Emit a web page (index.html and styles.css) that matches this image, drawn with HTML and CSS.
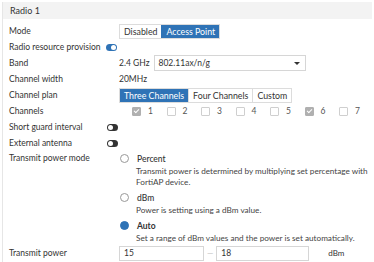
FILE: index.html
```html
<!DOCTYPE html>
<html lang="en">
  <head>
    <meta charset="UTF-8" />
    <title>Radio 1</title>
    <link rel="stylesheet" href="styles.css">
  </head>
  <body>
    <div class="panel">
      <div class="panel-title">Radio 1</div>

      <div class="row">
        <div class="label">Mode</div>
        <div class="btn-group">
          <span class="btn">Disabled</span>
          <span class="btn active">Access Point</span>
        </div>
      </div>

      <div class="row">
        <div class="label label-auto">Radio resource provision</div>
        <span class="toggle on"></span>
      </div>

      <div class="row">
        <div class="label">Band</div>
        <span class="band-text">2.4 GHz</span>
        <div class="select">
          <span>802.11ax/n/g</span>
          <span class="caret"></span>
        </div>
      </div>

      <div class="row">
        <div class="label">Channel width</div>
        <span>20MHz</span>
      </div>

      <div class="row">
        <div class="label">Channel plan</div>
        <div class="btn-group">
          <span class="btn active">Three Channels</span>
          <span class="btn">Four Channels</span>
          <span class="btn">Custom</span>
        </div>
      </div>

      <div class="row">
        <div class="label">Channels</div>
        <div class="channels">
          <label class="chan"><span class="check checked"></span>1</label>
          <label class="chan"><span class="check"></span>2</label>
          <label class="chan"><span class="check"></span>3</label>
          <label class="chan"><span class="check"></span>4</label>
          <label class="chan"><span class="check"></span>5</label>
          <label class="chan"><span class="check checked"></span>6</label>
          <label class="chan"><span class="check"></span>7</label>
        </div>
      </div>

      <div class="row">
        <div class="label label-toggle">Short guard interval</div>
        <span class="toggle"></span>
      </div>

      <div class="row">
        <div class="label label-toggle">External antenna</div>
        <span class="toggle"></span>
      </div>

      <div class="row row-top">
        <div class="label">Transmit power mode</div>
        <div class="options">
          <div class="option">
            <div class="option-title"><span class="radio"></span>Percent</div>
            <div class="option-desc">Transmit power is determined by multiplying set percentage with FortiAP device.</div>
          </div>
          <div class="option">
            <div class="option-title"><span class="radio"></span>dBm</div>
            <div class="option-desc">Power is setting using a dBm value.</div>
          </div>
          <div class="option">
            <div class="option-title selected"><span class="radio checked"></span>Auto</div>
            <div class="option-desc">Set a range of dBm values and the power is set automatically.</div>
          </div>
        </div>
      </div>

      <div class="row">
        <div class="label">Transmit power</div>
        <div class="range">
          <div class="input input-from">15</div>
          <span class="dash">&mdash;</span>
          <div class="input input-to">18</div>
          <span class="unit">dBm</span>
        </div>
      </div>
    </div>
  </body>
</html>
```

FILE: styles.css
```css
body {
  margin: 0;
  font-family: Lato, "Open Sans", sans-serif;
  font-size: 8.5px;
  color: #333;
  background-color: #fff;
}

.panel {
  margin: 2px 2px 0 2px;
  border-left: 1px solid #e6e6e6;
  height: 260px;
  overflow: hidden;
}

.panel-title {
  background-color: #f3f3f3;
  height: 17px;
  line-height: 17px;
  padding-left: 7px;
  font-size: 9px;
}

.row {
  display: flex;
  align-items: center;
  height: 16px;
}

.row:nth-child(2) {
  margin-top: 4px;
}

.row-top {
  align-items: flex-start;
  height: auto;
  margin-bottom: 1px;
}

.row-top .label {
  line-height: 15px;
}

.label {
  width: 110px;
  padding-left: 6px;
  flex-shrink: 0;
}

.label-auto {
  width: auto;
  padding-right: 5px;
}

.label-toggle {
  width: 98px;
}

/* button groups */
.btn-group {
  display: flex;
  border: 1px solid #dcdcdc;
}

.btn {
  padding: 0 4px;
  height: 13px;
  line-height: 13px;
  font-size: 8.8px;
  border-left: 1px solid #dcdcdc;
  color: #333;
}

.btn:first-child {
  border-left: none;
}

.btn.active {
  background-color: #2f73b6;
  color: #fff;
  border-color: #2f73b6;
}

/* toggles */
.toggle {
  display: inline-block;
  position: relative;
  width: 11px;
  height: 7px;
  border-radius: 4px;
  background-color: #333;
}

.toggle::after {
  content: "";
  position: absolute;
  top: 1px;
  left: 1px;
  width: 5px;
  height: 5px;
  border-radius: 50%;
  background-color: #fff;
}

.toggle.on {
  background-color: #2f73b6;
}

.toggle.on::after {
  left: 5px;
}

/* band */
.band-text {
  margin-right: 4px;
}

.select {
  display: flex;
  align-items: center;
  justify-content: space-between;
  width: 141px;
  height: 14px;
  border: 1px solid #d6d6d6;
  padding: 0 5px 0 4px;
}

.caret {
  width: 0;
  height: 0;
  border-left: 3px solid transparent;
  border-right: 3px solid transparent;
  border-top: 3px solid #333;
}

/* channels */
.channels {
  display: flex;
  padding-left: 13px;
}

.chan {
  display: flex;
  align-items: center;
  width: 34.5px;
  color: #555;
}

.check {
  display: inline-block;
  position: relative;
  width: 7px;
  height: 7px;
  border: 1px solid #cfcfcf;
  border-radius: 1px;
  margin-right: 7px;
}

.check.checked {
  background-color: #b0b0b0;
  border-color: #b0b0b0;
}

.check.checked::after {
  content: "";
  position: absolute;
  left: 2px;
  top: 0;
  width: 2px;
  height: 4px;
  border: solid #fff;
  border-width: 0 1px 1px 0;
  transform: rotate(45deg);
}

/* power mode options */
.options {
  display: flex;
  flex-direction: column;
}

.option {
  margin-bottom: 2px;
}

.option:last-child {
  margin-bottom: 0;
}

.option-title {
  display: flex;
  align-items: center;
  height: 15px;
  font-weight: 500;
}

.option-title.selected {
  font-weight: bold;
}

.radio {
  display: inline-block;
  width: 7px;
  height: 7px;
  border: 1px solid #999;
  border-radius: 50%;
  margin-left: 1px;
  margin-right: 8px;
}

.radio.checked {
  background-color: #2f73b6;
  border-color: #2f73b6;
}

.option-desc {
  padding-left: 17px;
  font-size: 8.2px;
  line-height: 11px;
  color: #444;
}

/* transmit power */
.range {
  display: flex;
  align-items: center;
}

.input {
  height: 13px;
  line-height: 13px;
  border: 1px solid #d6d6d6;
  padding-left: 4px;
}

.input-from {
  width: 79px;
}

.input-to {
  width: 87px;
}

.dash {
  color: #bbb;
  font-size: 8px;
  margin: 0 3px;
}

.unit {
  margin-left: 19px;
  font-size: 8px;
}
```
